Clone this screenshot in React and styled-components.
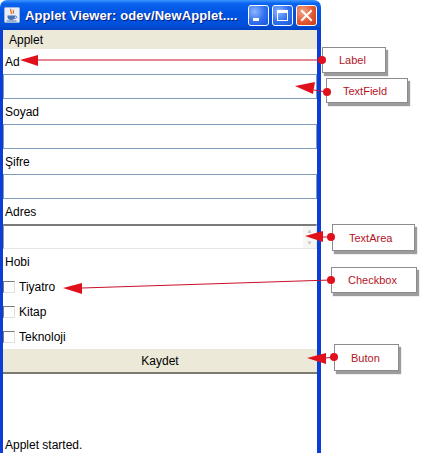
import React from 'react';
import styled, { createGlobalStyle } from 'styled-components';

const GlobalStyle = createGlobalStyle`
  html, body {
    margin: 0;
    padding: 0;
    background: #fff;
  }
  body {
    font-family: "Liberation Sans", Arial, sans-serif;
    font-size: 12px;
    color: #000;
  }
`;

const Page = styled.div`
  position: relative;
  width: 421px;
  height: 453px;
  overflow: hidden;
  background: #fff;
`;

const Window = styled.div`
  width: 321px;
  height: 453px;
  display: flex;
  flex-direction: column;
`;

const TitleBar = styled.div`
  height: 30px;
  flex: none;
  display: flex;
  align-items: center;
  padding: 0 4px 0 4px;
  box-sizing: border-box;
  border-radius: 7px 7px 0 0;
  background: linear-gradient(
    to bottom,
    #3d95ff 0%,
    #0a63ee 12%,
    #0053e2 45%,
    #0050dc 80%,
    #0042c4 100%
  );
`;

const TitleText = styled.span`
  flex: 1;
  margin-left: 5px;
  color: #fff;
  font-weight: bold;
  font-size: 13px;
  letter-spacing: 0.1px;
  white-space: nowrap;
  text-shadow: 1px 1px 0 #0a1e78;
`;

const Controls = styled.div`
  display: flex;
  gap: 3px;
`;

const CtrlButton = styled.div`
  width: 21px;
  height: 21px;
  box-sizing: border-box;
  border: 1px solid #fff;
  border-radius: 3px;
  display: flex;
  align-items: center;
  justify-content: center;
  background: ${(p) =>
    p.$close
      ? 'radial-gradient(circle at 30% 30%, #f3a58a 0%, #e3582f 55%, #c63a1c 100%)'
      : 'radial-gradient(circle at 30% 30%, #8fb6ff 0%, #2f6ff0 55%, #1c54d8 100%)'};
`;

const Frame = styled.div`
  flex: 1;
  display: flex;
  flex-direction: column;
  border-left: 3px solid #0b3ed6;
  border-right: 4px solid #0b3ed6;
  background: #fff;
`;

const MenuBar = styled.div`
  height: 19px;
  flex: none;
  display: flex;
  align-items: center;
  padding-left: 6px;
  background: #ece9d8;
`;

const Content = styled.div`
  display: flex;
  flex-direction: column;
  flex: 1;
`;

const LabelRow = styled.div`
  height: 25px;
  display: flex;
  align-items: center;
  padding-left: 2px;
`;

const TextField = styled.div`
  height: 25px;
  box-sizing: border-box;
  border: 1px solid #7f9db9;
  background: #fff;
`;

const TextArea = styled.div`
  height: 25px;
  box-sizing: border-box;
  display: flex;
  justify-content: flex-end;
  border-top: 2px solid #7a7a7a;
  border-left: 1px solid #9a9a9a;
  border-right: 1px solid #e6e6e6;
  border-bottom: 1px solid #e6e6e6;
  background: #fff;
`;

const ScrollCol = styled.div`
  width: 13px;
  display: flex;
  flex-direction: column;
  justify-content: space-between;
  align-items: center;
  padding: 2px 0;
  background: #f6f6f4;
  color: #c4c4c4;
  font-size: 6px;
  line-height: 6px;
`;

const CheckRow = styled.label`
  height: 25px;
  display: flex;
  align-items: center;
  gap: 4px;
`;

const CheckBox = styled.span`
  width: 12px;
  height: 12px;
  box-sizing: border-box;
  border-top: 1px solid #7a7a7a;
  border-left: 1px solid #7a7a7a;
  border-right: 1px solid #e0e0e0;
  border-bottom: 1px solid #e0e0e0;
  background: #fff;
`;

const SaveButton = styled.div`
  height: 25px;
  box-sizing: border-box;
  display: flex;
  align-items: center;
  justify-content: center;
  background: #ece9d8;
  border-bottom: 2px solid #7c7a6e;
`;

const Spacer = styled.div`
  flex: 1;
`;

const StatusBar = styled.div`
  height: 16px;
  display: flex;
  align-items: center;
  padding-left: 2px;
`;

const Overlay = styled.svg`
  position: absolute;
  left: 0;
  top: 0;
  pointer-events: none;
`;

const Callout = styled.div`
  position: absolute;
  left: ${(p) => p.$x}px;
  top: ${(p) => p.$y}px;
  width: ${(p) => p.$w}px;
  height: ${(p) => p.$h}px;
  box-sizing: border-box;
  display: flex;
  align-items: center;
  padding-left: 16px;
  background: #fff;
  border: 1px solid #8c8c8c;
  box-shadow: 2px 3px 1px #9c9c9c;
  color: #b3141e;
  font-size: 11px;
`;

const JavaIcon = () => (
  <svg width="16" height="16" viewBox="0 0 16 16">
    <rect x="0.5" y="0.5" width="15" height="15" rx="1" fill="#e8eef8" stroke="#9db3d8" />
    <path d="M7 2 C5 4 9 5 7 7 M9.5 3 C8.5 4.5 10.5 5 9 6.5" stroke="#e0651a" strokeWidth="1.2" fill="none" />
    <path d="M3.5 8.5 H11 V10 C11 12 9.5 13 7.2 13 C5 13 3.5 12 3.5 10 Z" fill="#4a6fb5" />
    <path d="M11 9 C13.5 9 13.5 11.5 10.5 11.5" stroke="#4a6fb5" strokeWidth="1" fill="none" />
    <rect x="2.5" y="13.5" width="10" height="1" fill="#4a6fb5" />
  </svg>
);

const callouts = [
  { text: 'Label', x: 322, y: 47, w: 64, h: 26 },
  { text: 'TextField', x: 326, y: 78, w: 82, h: 25 },
  { text: 'TextArea', x: 332, y: 224, w: 83, h: 27 },
  { text: 'Checkbox', x: 331, y: 267, w: 86, h: 26 },
  { text: 'Buton', x: 334, y: 344, w: 65, h: 27 }
];

// ok çizgileri: uç, taban ve nokta
const arrows = [
  { tip: [20, 60], base: [[38, 55], [38, 66]], from: [38, 60], dot: [322, 60] },
  { tip: [295, 86], base: [[315, 82], [313, 94]], from: [314, 90], dot: [327, 92] },
  { tip: [305, 236], base: [[323, 231], [323, 242]], from: [323, 237], dot: [331, 237] },
  { tip: [63, 288], base: [[82, 283], [82, 294]], from: [82, 288], dot: [331, 280] },
  { tip: [307, 358], base: [[326, 353], [326, 364]], from: [326, 358], dot: [334, 357] }
];

const App = () => {
  return (
    <Page>
      <GlobalStyle />
      <Window>
        <TitleBar>
          <JavaIcon />
          <TitleText>Applet Viewer: odev/NewApplet....</TitleText>
          <Controls>
            <CtrlButton>
              <svg width="19" height="19" viewBox="0 0 19 19">
                <rect x="4" y="12" width="6" height="3" fill="#fff" />
              </svg>
            </CtrlButton>
            <CtrlButton>
              <svg width="19" height="19" viewBox="0 0 19 19">
                <rect x="4.5" y="4.5" width="10" height="10" fill="none" stroke="#fff" strokeWidth="1" />
                <rect x="4" y="4" width="11" height="3" fill="#fff" />
              </svg>
            </CtrlButton>
            <CtrlButton $close>
              <svg width="19" height="19" viewBox="0 0 19 19">
                <path d="M5 5 L14 14 M14 5 L5 14" stroke="#fff" strokeWidth="2" strokeLinecap="square" />
              </svg>
            </CtrlButton>
          </Controls>
        </TitleBar>
        <Frame>
          <MenuBar>Applet</MenuBar>
          <Content>
            <LabelRow>Ad</LabelRow>
            <TextField />
            <LabelRow>Soyad</LabelRow>
            <TextField />
            <LabelRow>Şifre</LabelRow>
            <TextField />
            <LabelRow>Adres</LabelRow>
            <TextArea>
              <ScrollCol>
                <span>▲</span>
                <span>▼</span>
              </ScrollCol>
            </TextArea>
            <LabelRow>Hobi</LabelRow>
            <CheckRow>
              <CheckBox />
              Tiyatro
            </CheckRow>
            <CheckRow>
              <CheckBox />
              Kitap
            </CheckRow>
            <CheckRow>
              <CheckBox />
              Teknoloji
            </CheckRow>
            <SaveButton>Kaydet</SaveButton>
            <Spacer />
            <StatusBar>Applet started.</StatusBar>
          </Content>
        </Frame>
      </Window>

      {callouts.map((c) => (
        <Callout key={c.text} $x={c.x} $y={c.y} $w={c.w} $h={c.h}>
          {c.text}
        </Callout>
      ))}

      <Overlay width="421" height="453" viewBox="0 0 421 453">
        {arrows.map((a, i) => (
          <g key={i}>
            <line x1={a.from[0]} y1={a.from[1]} x2={a.dot[0]} y2={a.dot[1]} stroke="#c8102a" strokeWidth="1" />
            <polygon
              points={`${a.tip[0]},${a.tip[1]} ${a.base[0][0]},${a.base[0][1]} ${a.base[1][0]},${a.base[1][1]}`}
              fill="#e0101c"
            />
            <circle cx={a.dot[0]} cy={a.dot[1]} r="4" fill="#e0101c" />
          </g>
        ))}
      </Overlay>
    </Page>
  );
};

export default App;
